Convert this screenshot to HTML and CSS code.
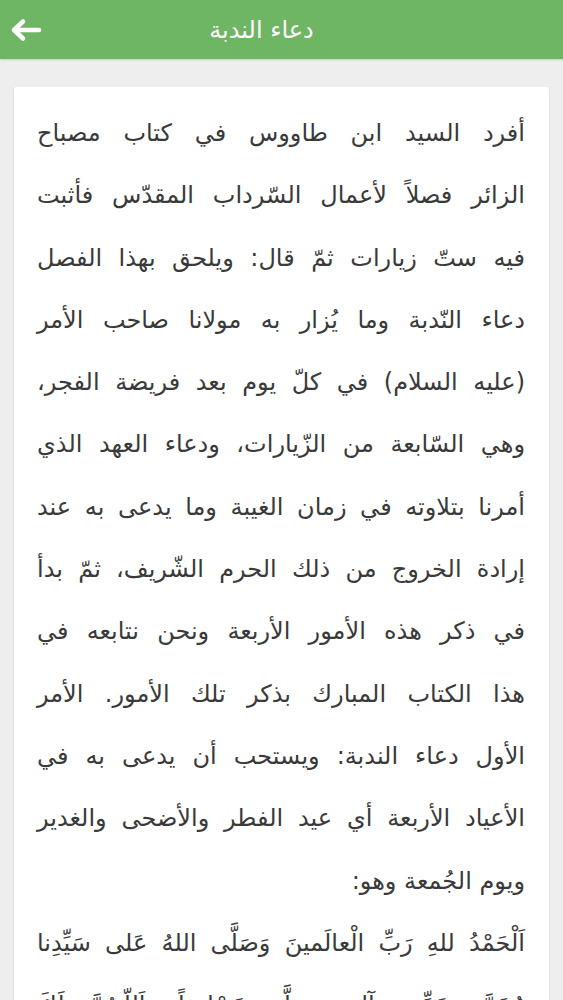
FILE: index.html
```html
<!DOCTYPE html>
<html lang="ar">
	<head>
		<meta charset="UTF-8">
		<title>دعاء الندبة</title>
		<link rel="stylesheet" href="styles.css">
	</head>
	<body>
		<div class="toolbar">
			<a href="#" class="back">
				<svg width="32" height="24" viewBox="0 0 32 24"><path d="M29 12H5M13 3.5L4 12l9 8.5" fill="none" stroke="#fff" stroke-width="4.5" stroke-linecap="round" stroke-linejoin="round"/></svg>
			</a>
			<h1 class="title">دعاء الندبة</h1>
		</div>
		<div class="page">
			<div class="card" dir="rtl">
				<p class="para">
					<span class="ln">أفرد السيد ابن طاووس في كتاب مصباح</span>
					<span class="ln">الزائر فصلاً لأعمال السّرداب المقدّس فأثبت</span>
					<span class="ln">فيه ستّ زيارات ثمّ قال: ويلحق بهذا الفصل</span>
					<span class="ln">دعاء النّدبة وما يُزار به مولانا صاحب الأمر</span>
					<span class="ln">(عليه السلام) في كلّ يوم بعد فريضة الفجر،</span>
					<span class="ln">وهي السّابعة من الزّيارات، ودعاء العهد الذي</span>
					<span class="ln">أمرنا بتلاوته في زمان الغيبة وما يدعى به عند</span>
					<span class="ln">إرادة الخروج من ذلك الحرم الشّريف، ثمّ بدأ</span>
					<span class="ln">في ذكر هذه الأمور الأربعة ونحن نتابعه في</span>
					<span class="ln">هذا الكتاب المبارك بذكر تلك الأمور. الأمر</span>
					<span class="ln">الأول دعاء الندبة: ويستحب أن يدعى به في</span>
					<span class="ln">الأعياد الأربعة أي عيد الفطر والأضحى والغدير</span>
					<span class="ln end">ويوم الجُمعة وهو:</span>
				</p>
				<p class="para">
					<span class="ln">اَلْحَمْدُ للهِ رَبِّ الْعالَمينَ وَصَلَّى اللهُ عَلى سَيِّدِنا</span>
					<span class="ln">مُحَمَّد نَبِيِّه وَآلِهِ وَسَلَّمَ تَسْليماً، اَللّـهُمَّ لَكَ</span>
					<span class="ln">الْحَمْدُ عَلى ما جَرى بِهِ قَضاؤُكَ في اَوْلِيائِكَ</span>
					<span class="ln end">الَّذينَ اسْتَخْلَصْتَهُمْ لِنَفْسِكَ وَدينِكَ</span>
				</p>
			</div>
		</div>
	</body>
</html>
```
FILE: styles.css
```css
* { margin:0; padding:0; box-sizing:border-box; }
html, body { background:#eeeeee; }
body { font-family:"DejaVu Sans", sans-serif; overflow:hidden; height:1000px; }

/* 상단 바 */
.toolbar { height:59px; background:#6eb663; display:flex; align-items:center; box-shadow:0 1px 2px rgba(0,0,0,.15); }
.back { width:52px; height:59px; display:flex; align-items:center; justify-content:center; }
.back svg { display:block; }
.title { flex:1; margin-right:92px; text-align:center; color:#fff; font-size:24px; font-weight:normal; }

/* 본문 카드 */
.page { padding:28px 14px 0; }
.card { background:#fff; border-radius:2px; box-shadow:0 1px 2px rgba(0,0,0,.18); padding:15px 24px 0 23px; }
.para { color:#3a3a3a; font-size:24px; line-height:62.3px; }
.ln { display:block; white-space:nowrap; text-align:justify; text-align-last:justify; }
.ln.end { text-align-last:right; }
```
